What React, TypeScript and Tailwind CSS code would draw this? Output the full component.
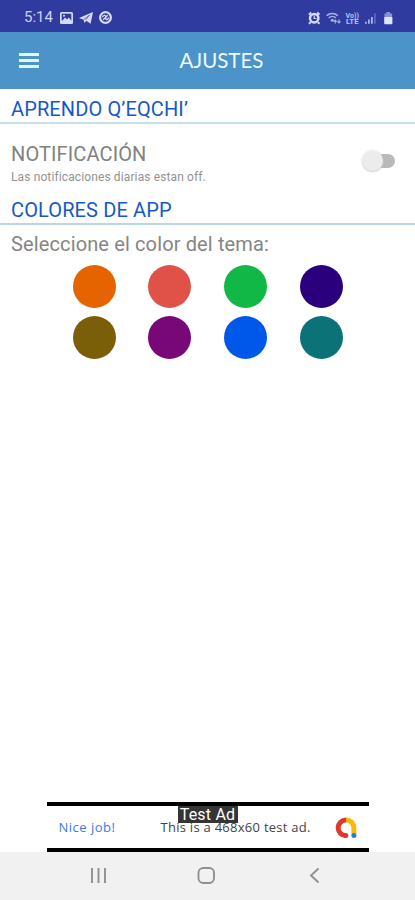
import React from "react";

const swatches = [
  "bg-[#e66400]",
  "bg-[#e05248]",
  "bg-[#11b845]",
  "bg-[#2b007c]",
  "bg-[#7b5e08]",
  "bg-[#780878]",
  "bg-[#0058ea]",
  "bg-[#0b7378]",
];

function StatusBar() {
  return (
    <div className="flex h-8 items-center bg-[#303b9f] pl-6 pr-[21px] pt-[3px] text-[#cbd3f8]">
      <span className="w-[30px] whitespace-nowrap text-[15px] leading-none">5:14</span>
      <svg className="ml-[6px]" width="13" height="12" viewBox="0 0 13 12">
        <rect width="13" height="12" rx="1.5" fill="#d5dcfa" />
        <rect x="1.7" y="1.7" width="9.6" height="7" fill="#303b9f" />
        <path d="M1.7 9.5 5 5.5l2 2 1.8-2 2.5 3.3v.7Z" fill="#d5dcfa" />
        <circle cx="4" cy="3.7" r="1" fill="#d5dcfa" />
      </svg>
      <svg className="ml-[6px]" width="14" height="12" viewBox="0 0 14 12">
        <path d="M0 6 14 0 11.6 11.8 7.3 8.8 5.4 11 4.6 7.7Z" fill="#d5dcfa" />
        <path d="M4.8 7.5 10.5 3.1 6.6 8" stroke="#303b9f" strokeWidth=".6" fill="none" />
      </svg>
      <svg className="ml-[6px]" width="13" height="13" viewBox="0 0 13 13">
        <circle cx="6.5" cy="6.5" r="5.4" fill="none" stroke="#d5dcfa" strokeWidth="2.2" />
        <path d="M3.4 6.2c1-2 2.6-2.5 3.4-1s-.6 3 .5 3.4 2-.7 2.5-2M4.2 8.8l4.5-4.6" fill="none" stroke="#d5dcfa" strokeWidth="1.3" />
      </svg>
      <div className="flex-1" />
      <svg width="86" height="14" viewBox="0 0 86 14">
        <g fill="none" stroke="#d5dcfa">
          <circle cx="6.2" cy="7.2" r="4.2" strokeWidth="2.5" />
          <path d="M.9 3.6 3.2 1.4M9.2 1.4l2.3 2.2M2.6 11.2.9 12.8M9.8 11.2l1.7 1.6" strokeWidth="2" />
          <path d="M6.2 4.5v3h2.2" strokeWidth="1.2" />
          <g stroke="#aab3ea">
            <path d="M18.7 4.7c3.2-3 8-3 11.1 0M20.8 6.9c2-1.9 5-1.9 7 0" strokeWidth="1.6" />
            <path d="M27.3 12.6V9m-1.5 1.7L27.3 9l1.5 1.7M31 8.3v3.7M29.5 10.3 31 12l1.5-1.7" strokeWidth="1.1" />
          </g>
        </g>
        <circle cx="24.3" cy="9.3" r="1.5" fill="#aab3ea" />
        <text x="37.5" y="6.6" fontSize="7" fontWeight="700" textLength="13.5" lengthAdjust="spacingAndGlyphs" fill="#b8c1f2">Vo))</text>
        <text x="38" y="13" fontSize="7.5" fontWeight="700" textLength="12.5" lengthAdjust="spacingAndGlyphs" fill="#b8c1f2">LTE</text>
        <path d="M57 10.8h1.8v2H57ZM60 8.5h1.8v4.3H60ZM63 6h1.8v6.8H63Z" fill="#aab3ea" />
        <path d="M66 2.5h1.8v10.3H66Z" fill="#5c68bd" />
        <path d="M76.5 2.5h2V1h3.6v1.5h2v4h-7.6Z" fill="#8792d6" />
        <rect x="76.2" y="6" width="8.2" height="7.2" rx=".7" fill="#e0e5ff" />
      </svg>
    </div>
  );
}

function Header() {
  return (
    <header className="grid h-[57px] grid-cols-[1fr_auto_1fr] items-center bg-[#4b93c9] pl-[19px] pr-[19px] text-[#eef9ff]">
      <div className="flex w-5 flex-col gap-[3px]">
        <i className="h-[3px] bg-[#e2f6fd]" />
        <i className="h-[3px] bg-[#e2f6fd]" />
        <i className="h-[3px] bg-[#e2f6fd]" />
      </div>
      <h1 className="ml-7 whitespace-nowrap pb-px font-['Lato',sans-serif] text-[20.5px] leading-none">AJUSTES</h1>
    </header>
  );
}

function Ad() {
  return (
    <div className="relative mx-auto flex h-[50px] w-[322px] items-center border-y-4 border-black bg-white font-['Open_Sans',sans-serif] text-[13px]">
      <span className="ml-3 w-[102px] whitespace-nowrap pt-[2px] tracking-[0.5px] text-[#347fe5]">Nice job!</span>
      <span className="w-[151px] whitespace-nowrap pt-[2px] tracking-[0.27px] text-[#444]">This is a 468x60 test ad.</span>
      <svg className="ml-[23px] mt-[2px]" width="22" height="22" viewBox="0 0 22 22" fill="none" strokeWidth="5">
        <path d="M18.9 17.5v-6.7A7.8 7.8 0 0 0 11.1 3" stroke="#fbb90b" />
        <path d="M11.1 3a7.8 7.8 0 0 0-.3 15.6" stroke="#e2382c" />
        <circle cx="10.8" cy="18.6" r="2.5" fill="#e2382c" />
        <circle cx="18.9" cy="18.5" r="2.5" fill="#287bd1" />
      </svg>
      <span className="absolute left-[131px] top-0 flex h-[17px] w-[60px] items-center justify-center whitespace-nowrap bg-[#353535] font-['Roboto',sans-serif] text-[16px] leading-none tracking-[0.2px] text-white">Test Ad</span>
    </div>
  );
}

export default function App() {
  return (
    <div className="flex h-[900px] w-[415px] flex-col overflow-hidden bg-white font-['Roboto',sans-serif]">
      <StatusBar />
      <Header />
      <main className="flex flex-1 flex-col">
        <h2 className="flex h-[35px] items-center whitespace-nowrap border-b-2 border-[#c6e0e7] pl-[11px] pt-[6px] text-[20px] leading-none tracking-[0.12px] text-[#1559c5]">APRENDO Q’EQCHI’</h2>
        <section className="flex h-[72px] items-start justify-between pl-[11px] pr-5">
          <div>
            <h3 className="mt-[19px] whitespace-nowrap text-[20px] leading-[22px] tracking-[0.12px] text-[#818181]">NOTIFICACIÓN</h3>
            <p className="mt-[5px] whitespace-nowrap text-[12px] leading-[14px] tracking-[0.12px] text-[#929292]">Las notificaciones diarias estan off.</p>
          </div>
          <div className="mt-[26px] flex w-[33px] items-center">
            <i className="z-10 size-[21px] shrink-0 rounded-full bg-[#ececec] shadow-[0_1px_2px_#ccc]" />
            <i className="-ml-3 h-[14px] w-6 shrink-0 rounded-full bg-[#b9b9b9]" />
          </div>
        </section>
        <h2 className="flex h-[29px] items-center whitespace-nowrap border-b-2 border-[#b9d7e2] pl-[11px] text-[20px] leading-none tracking-[0.12px] text-[#1559c5]">COLORES DE APP</h2>
        <p className="mt-[8px] whitespace-nowrap pl-[11px] text-[20px] leading-[22px] tracking-[0.13px] text-[#858585]">Seleccione el color del tema:</p>
        <div className="mt-[10px] grid grid-cols-[repeat(4,43px)] gap-x-[32.7px] gap-y-[7.5px] pl-[72.5px]">
          {swatches.map((color) => (
            <button key={color} className={`size-[43px] rounded-full ${color}`} />
          ))}
        </div>
        <div className="mt-auto">
          <Ad />
        </div>
      </main>
      <nav className="h-12 bg-[#f1f1f1]">
        <svg width="415" height="48" viewBox="0 0 415 48" fill="none" stroke="#909090" strokeWidth="1.9">
          <path d="M92 16v15M98.5 16v15M105 16v15" />
          <rect x="198.5" y="16" width="15.5" height="15" rx="4.7" />
          <path d="m318.5 16.5-7.5 7 7.5 7" />
        </svg>
      </nav>
    </div>
  );
}
